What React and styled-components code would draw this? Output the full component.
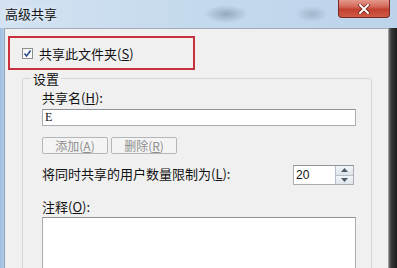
import React from "react";
import styled, { createGlobalStyle } from "styled-components";

const GlobalStyle = createGlobalStyle`
  html, body {
    margin: 0;
    padding: 0;
  }
  body {
    width: 397px;
    height: 268px;
    overflow: hidden;
    background: #2b2b2b;
    font-family: "Noto Sans CJK SC", "Liberation Sans", sans-serif;
    font-size: 13px;
    color: #111;
  }
`;

const Window = styled.div`
  width: 397px;
  height: 268px;
  display: flex;
  flex-direction: column;
  overflow: hidden;
`;

const TitleBar = styled.div`
  height: 28px;
  flex: none;
  display: flex;
  align-items: flex-start;
  background:
    radial-gradient(ellipse 22px 9px at 226px 14px, rgba(90, 110, 135, 0.45), transparent),
    radial-gradient(ellipse 16px 8px at 312px 14px, rgba(100, 120, 140, 0.35), transparent),
    linear-gradient(90deg, #d3e2f2 0%, #c6daee 45%, #bdd3ea 100%);
`;

const Title = styled.div`
  padding: 6px 0 0 5px;
  font-size: 13px;
  line-height: 15px;
  color: #141414;
  text-shadow: 0 0 6px rgba(255, 255, 255, 0.9);
`;

const CloseButton = styled.div`
  margin-left: auto;
  margin-right: 7px;
  width: 52px;
  height: 18px;
  box-sizing: border-box;
  border: 1px solid #7a2a22;
  border-top: none;
  border-radius: 0 0 4px 4px;
  background: linear-gradient(180deg, #e3988a 0%, #d4685a 40%, #c2412f 55%, #cf5a45 100%);
  display: flex;
  align-items: center;
  justify-content: center;
`;

const Frame = styled.div`
  flex: 1;
  display: flex;
  min-height: 0;
`;

const LeftEdge = styled.div`
  width: 4px;
  flex: none;
  background: linear-gradient(90deg, #9dbde0, #b4cde8);
`;

const RightEdge = styled.div`
  width: 8px;
  flex: none;
  background: linear-gradient(90deg, #6a6a6a 0%, #3a3a3a 30%, #1c1c1c 100%);
`;

const Body = styled.div`
  flex: 1;
  background: #f0f0f0;
  border-top: 1px solid #a3abb4;
  border-left: 1px solid #8fa3b8;
  border-right: 1px solid #9aa1a8;
  padding-top: 7px;
  display: flex;
  flex-direction: column;
  align-items: flex-start;
  overflow: hidden;
  & > * {
    flex: none;
  }
`;

const Highlight = styled.div`
  margin-left: 3px;
  width: 187px;
  height: 34px;
  box-sizing: border-box;
  border: 2px solid #c8303b;
  display: flex;
  align-items: center;
  gap: 6px;
  padding-left: 12px;
`;

const CheckBox = styled.div`
  width: 11px;
  height: 11px;
  box-sizing: border-box;
  border: 1px solid #8e8f8f;
  background: linear-gradient(135deg, #f4f4f4, #ffffff);
  display: flex;
  align-items: center;
  justify-content: center;
`;

const Text = styled.span`
  line-height: 15px;
  white-space: nowrap;
  color: ${(p) => (p.$muted ? "#8e8e8e" : "#111")};
`;

const Group = styled.fieldset`
  margin: 1px 16px 0 17px;
  align-self: stretch;
  min-width: 0;
  border: 1px solid #d3d7db;
  border-radius: 3px;
  padding: 4px 15px 0 19px;
  display: flex;
  flex-direction: column;
  align-items: stretch;
  & > * {
    flex: none;
  }
`;

const Legend = styled.legend`
  padding: 0 2px;
  margin-left: -11px;
  line-height: 15px;
`;

const TextInput = styled.input`
  margin-top: 4px;
  height: 17px;
  box-sizing: border-box;
  border: 1px solid #abadb3;
  border-top-color: #8f9399;
  background: #fff;
  padding: 0 2px;
  font-family: "Liberation Serif", "Noto Sans CJK SC", serif;
  font-size: 12px;
  color: #111;
  outline: none;
`;

const ButtonRow = styled.div`
  margin-top: 11px;
  display: flex;
  gap: 3px;
`;

const Button = styled.div`
  width: 66px;
  height: 17px;
  box-sizing: border-box;
  border: 1px solid #b3b7ba;
  border-radius: 2px;
  background: #f4f4f4;
  display: flex;
  align-items: center;
  justify-content: center;
  font-size: 12px;
`;

const LimitRow = styled.div`
  margin-top: 11px;
  display: flex;
  justify-content: space-between;
  align-items: flex-start;
  padding-right: 2px;
`;

const LimitLabel = styled(Text)`
  padding-top: 1px;
`;

const Spinner = styled.div`
  width: 61px;
  height: 20px;
  box-sizing: border-box;
  border: 1px solid #abadb3;
  border-top-color: #8f9399;
  background: #fff;
  display: flex;
`;

const SpinValue = styled.div`
  flex: 1;
  padding-left: 2px;
  font-family: "Liberation Sans", sans-serif;
  font-size: 12px;
  line-height: 18px;
  color: #111;
`;

const SpinArrows = styled.div`
  width: 17px;
  display: flex;
  flex-direction: column;
  border-left: 1px solid #b7c0c8;
`;

const SpinArrow = styled.div`
  flex: 1;
  background: linear-gradient(180deg, #f3f6f9, #dde4ea);
  border-top: ${(p) => (p.$down ? "1px solid #b7c0c8" : "none")};
  display: flex;
  align-items: center;
  justify-content: center;
`;

const NotesLabel = styled(Text)`
  margin-top: 14px;
`;

const Notes = styled.textarea`
  margin-top: 3px;
  height: 80px;
  box-sizing: border-box;
  border: 1px solid #abadb3;
  border-top-color: #8f9399;
  background: #fff;
  resize: none;
  outline: none;
`;

const Arrow = ({ down }) => (
  <svg width="7" height="4" viewBox="0 0 7 4">
    <path d={down ? "M0 0 L7 0 L3.5 4 Z" : "M0 4 L7 4 L3.5 0 Z"} fill="#4d5b69" />
  </svg>
);

export default function App() {
  return (
    <>
      <GlobalStyle />
      <Window>
        <TitleBar>
          <Title>高级共享</Title>
          <CloseButton>
            <svg width="12" height="10" viewBox="0 0 12 10">
              <path d="M2 1 L10 9 M10 1 L2 9" stroke="#6b1d14" strokeWidth="3.4" strokeLinecap="square" />
              <path d="M2 1 L10 9 M10 1 L2 9" stroke="#ffffff" strokeWidth="2" strokeLinecap="square" />
            </svg>
          </CloseButton>
        </TitleBar>
        <Frame>
          <LeftEdge />
          <Body>
            <Highlight>
              <CheckBox>
                <svg width="9" height="9" viewBox="0 0 9 9">
                  <path d="M1.5 4.5 L3.6 7 L7.6 1.5" fill="none" stroke="#2a4c8c" strokeWidth="1.6" />
                </svg>
              </CheckBox>
              <Text>共享此文件夹(<u>S</u>)</Text>
            </Highlight>
            <Group>
              <Legend>设置</Legend>
              <Text>共享名(<u>H</u>):</Text>
              <TextInput readOnly value="E" />
              <ButtonRow>
                <Button><Text $muted>添加(<u>A</u>)</Text></Button>
                <Button><Text $muted>删除(<u>R</u>)</Text></Button>
              </ButtonRow>
              <LimitRow>
                <LimitLabel>将同时共享的用户数量限制为(<u>L</u>):</LimitLabel>
                <Spinner>
                  <SpinValue>20</SpinValue>
                  <SpinArrows>
                    <SpinArrow><Arrow /></SpinArrow>
                    <SpinArrow $down><Arrow down /></SpinArrow>
                  </SpinArrows>
                </Spinner>
              </LimitRow>
              <NotesLabel>注释(<u>O</u>):</NotesLabel>
              <Notes readOnly />
            </Group>
          </Body>
          <RightEdge />
        </Frame>
      </Window>
    </>
  );
}
